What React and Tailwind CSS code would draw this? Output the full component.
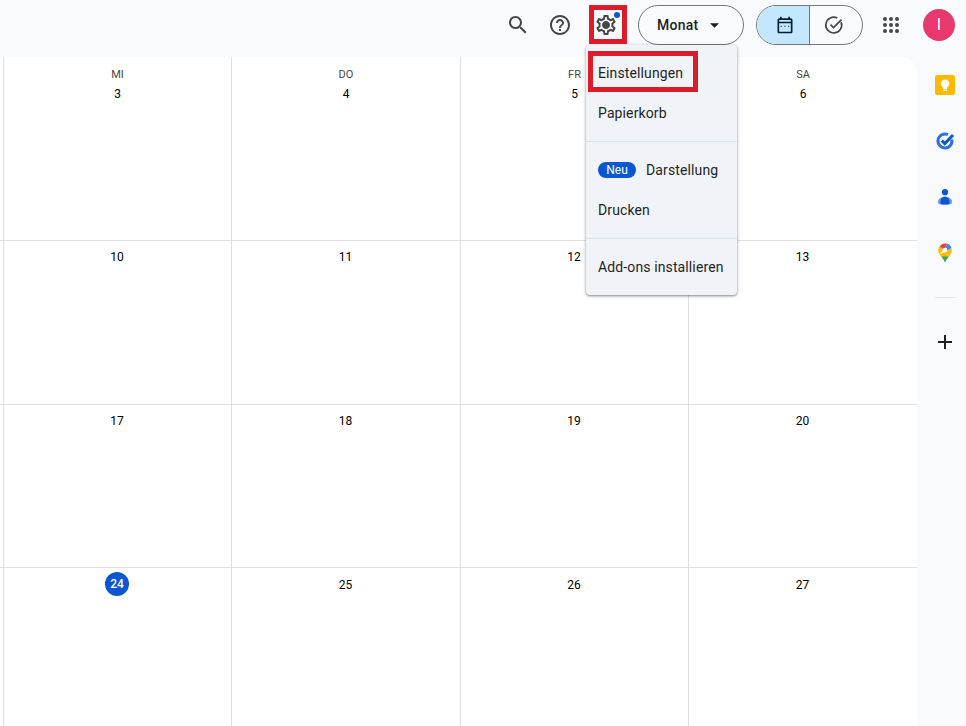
import React from 'react';

const weeks = [
  { rowClass: 'h-[183px]', days: ['3', '4', '5', '6'], labels: ['MI', 'DO', 'FR', 'SA'] },
  { rowClass: 'h-[164px]', days: ['10', '11', '12', '13'] },
  { rowClass: 'h-[163px]', days: ['17', '18', '19', '20'] },
  { rowClass: 'h-[159px]', days: ['24', '25', '26', '27'] },
];

const colWidths = ['w-[228px]', 'w-[229px]', 'w-[228px]', 'w-[229px]'];

function GearIcon() {
  return (
    <svg viewBox="0 0 24 24" className="w-[24px] h-[24px] fill-[#444746]">
      <path d="M19.43 12.98c.04-.32.07-.64.07-.98 0-.34-.03-.66-.07-.98l2.11-1.65c.19-.15.24-.42.12-.64l-2-3.46c-.09-.16-.26-.25-.44-.25-.06 0-.12.01-.17.03l-2.49 1c-.52-.4-1.08-.73-1.69-.98l-.38-2.65C14.46 2.18 14.25 2 14 2h-4c-.25 0-.46.18-.49.42l-.38 2.65c-.61.25-1.17.59-1.69.98l-2.49-1c-.06-.02-.12-.03-.18-.03-.17 0-.34.09-.43.25l-2 3.46c-.13.22-.07.49.12.64l2.11 1.65c-.04.32-.07.65-.07.98 0 .33.03.66.07.98l-2.11 1.65c-.19.15-.24.42-.12.64l2 3.46c.09.16.26.25.44.25.06 0 .12-.01.17-.03l2.49-1c.52.4 1.08.73 1.69.98l.38 2.65c.03.24.24.42.49.42h4c.25 0 .46-.18.49-.42l.38-2.65c.61-.25 1.17-.59 1.69-.98l2.49 1c.06.02.12.03.18.03.17 0 .34-.09.43-.25l2-3.46c.12-.22.07-.49-.12-.64l-2.11-1.65zm-1.98-1.71c.04.31.05.52.05.73 0 .21-.02.43-.05.73l-.14 1.13.89.7 1.08.84-.7 1.21-1.27-.51-1.04-.42-.9.68c-.43.32-.84.56-1.25.73l-1.06.43-.16 1.13-.2 1.35h-1.4l-.19-1.35-.16-1.13-1.06-.43c-.43-.18-.83-.41-1.23-.71l-.91-.7-1.06.43-1.27.51-.7-1.21 1.08-.84.89-.7-.14-1.13c-.03-.31-.05-.54-.05-.74s.02-.43.05-.73l.14-1.13-.89-.7-1.08-.84.7-1.21 1.27.51 1.04.42.9-.68c.43-.32.84-.56 1.25-.73l1.06-.43.16-1.13.2-1.35h1.39l.19 1.35.16 1.13 1.06.43c.43.18.83.41 1.23.71l.91.7 1.06-.43 1.27-.51.7 1.21-1.07.85-.89.7.14 1.13zM12 8c-2.21 0-4 1.79-4 4s1.79 4 4 4 4-1.79 4-4-1.79-4-4-4z" />
    </svg>
  );
}

function TopBar() {
  return (
    <div className="h-[57px] flex items-start pt-[5px] pl-[506px] relative">
      <div className="w-[24px] h-[40px] flex items-center">
        <svg viewBox="0 0 24 24" className="w-[24px] h-[24px] fill-[#444746]">
          <path d="M15.5 14h-.79l-.28-.27C15.41 12.59 16 11.11 16 9.5 16 5.91 13.09 3 9.5 3S3 5.91 3 9.5 5.91 16 9.5 16c1.61 0 3.09-.59 4.23-1.57l.27.28v.79l5 4.99L20.49 19l-4.99-5zm-6 0C7.01 14 5 11.99 5 9.5S7.01 5 9.5 5 14 7.01 14 9.5 11.99 14 9.5 14z" />
        </svg>
      </div>
      <div className="ml-[18px] w-[24px] h-[40px] flex items-center">
        <svg viewBox="0 0 24 24" className="w-[24px] h-[24px] fill-[#444746]">
          <path d="M11 18h2v-2h-2v2zm1-16C6.48 2 2 6.48 2 12s4.48 10 10 10 10-4.48 10-10S17.52 2 12 2zm0 18c-4.41 0-8-3.59-8-8s3.59-8 8-8 8 3.59 8 8-3.59 8-8 8zm0-14c-2.21 0-4 1.79-4 4h2c0-1.1.9-2 2-2s2 .9 2 2c0 2-3 1.75-3 5h2c0-2.25 3-2.5 3-5 0-2.21-1.79-4-4-4z" />
        </svg>
      </div>
      <div className="ml-[22px] w-[24px] h-[40px] flex items-center relative">
        <GearIcon />
        <span className="absolute top-[7px] right-[-2px] w-[6px] h-[6px] rounded-full bg-[#0b57d0]" />
      </div>
      <button className="ml-[20px] w-[106px] h-[40px] rounded-full border border-[#747775] flex items-center pl-[18px] text-[14px] font-medium tracking-[0.25px] text-[#1f1f1f]">
        Monat
        <svg viewBox="0 0 10 5" className="ml-[12px] w-[9px] h-[5px] fill-[#1f1f1f]">
          <path d="M0 0l5 5 5-5z" />
        </svg>
      </button>
      <div className="ml-[12px] w-[107px] h-[40px] rounded-full border border-[#747775] flex overflow-hidden">
        <div className="w-[53px] bg-[#c2e7ff] border-r border-[#747775] flex items-center justify-center pl-[4px]">
          <svg viewBox="0 0 24 24" className="w-[20px] h-[20px] fill-[#001d35]">
            <path d="M19 4h-1V2h-2v2H8V2H6v2H5c-1.1 0-2 .9-2 2v14c0 1.1.9 2 2 2h14c1.1 0 2-.9 2-2V6c0-1.1-.9-2-2-2zm0 16H5V10h14v10zm0-12H5V6h14v2zM8 13H6.9v1.5H8V13zm4.5 0h-1.1v1.5h1.1V13zm4.5 0h-1.1v1.5H17V13z" />
          </svg>
        </div>
        <div className="flex-1 flex items-center justify-center pr-[4px]">
          <svg viewBox="0 0 24 24" className="w-[20px] h-[20px] fill-none stroke-[#444746] stroke-2">
            <path d="M20.5 8.5A9.5 9.5 0 1 1 16 3.6" />
            <path d="M7.8 11.6l3.6 3.6L21 5.6" />
          </svg>
        </div>
      </div>
      <div className="ml-[20px] w-[16px] h-[40px] grid grid-cols-3 content-center gap-[2px]">
        {Array.from({ length: 9 }).map((_, i) => (
          <span key={i} className="w-[4px] h-[4px] rounded-full bg-[#444746]" />
        ))}
      </div>
      <div className="ml-[24px] mt-[4px] w-[32px] h-[32px] rounded-full bg-[#e8396f] flex items-center justify-center text-white text-[16px]">
        I
      </div>
    </div>
  );
}

function DayCell({ label, day, index, lastRow }) {
  const isToday = day === '24';
  return (
    <div className={`${colWidths[index]} border-l border-[#e0e0e0] flex flex-col items-center ${label ? 'pt-[10px]' : 'pt-[6px]'}`}>
      {label && <div className="h-[16px] leading-[16px] text-[11px] font-normal text-[#444746]">{label}</div>}
      {isToday ? (
        <div className="-mt-[2px] mr-[1px] w-[24px] h-[24px] rounded-full bg-[#0b57d0] text-white flex items-center justify-center text-[12px] font-medium">
          {day}
        </div>
      ) : (
        <div className={`leading-[20px] text-[12px] text-black ${label ? 'mt-[1px]' : 'mr-[1px]'} ${lastRow ? 'mt-[1px]' : ''}`}>{day}</div>
      )}
    </div>
  );
}

function Calendar() {
  return (
    <div className="w-[917px] h-[669px] bg-white rounded-tr-[16px] overflow-hidden">
      {weeks.map((week, r) => (
        <div key={r} className={`flex pl-[3px] ${week.rowClass} ${r > 0 ? 'border-t border-[#e0e0e0]' : ''}`}>
          {week.days.map((day, i) => (
            <DayCell key={day} day={day} index={i} lastRow={r === 3} label={week.labels ? week.labels[i] : null} />
          ))}
        </div>
      ))}
    </div>
  );
}

function SidePanel() {
  return (
    <div className="flex-1 flex flex-col items-center pl-[7px] pt-[18px]">
      {/* Keep */}
      <svg viewBox="0 0 20 20" className="w-[20px] h-[20px]">
        <rect width="20" height="20" rx="2" fill="#ffba00" />
        <circle cx="10" cy="8.6" r="4.2" fill="#fff" />
        <rect x="8" y="12" width="4" height="2" fill="#fff" />
        <rect x="8" y="14.6" width="4" height="1.2" fill="#fff" />
      </svg>
      {/* Tasks */}
      <svg viewBox="0 0 20 20" className="mt-[36px] w-[20px] h-[20px]">
        <path d="M16.8 8.5A7 7 0 1 1 12.8 3.6" fill="none" stroke="#2f6fe4" strokeWidth="3" />
        <path d="M6.8 9.6l3 3L18 4" fill="none" stroke="#0b57d0" strokeWidth="3" />
      </svg>
      {/* Contacts */}
      <svg viewBox="0 0 20 20" className="mt-[36px] w-[20px] h-[20px]">
        <circle cx="10" cy="5.2" r="3.1" fill="#0b57d0" />
        <path d="M3 15c0-3.2 3-5.2 7-5.2s7 2 7 5.2c0 1.5-1 2.5-2.5 2.5h-9C4 17.5 3 16.5 3 15z" fill="#6c97ea" />
        <path d="M5.4 15c0-2.8 2-5.2 4.6-5.2s4.6 2.4 4.6 5.2c0 1.5-.7 2.5-2 2.5H7.4C6.1 17.5 5.4 16.5 5.4 15z" fill="#0b57d0" />
      </svg>
      {/* Maps */}
      <svg viewBox="1 1 18 18.5" className="mt-[36px] w-[20px] h-[20px]">
        <path d="M10 19c-1-2.6-2.4-4.2-3.6-5.6L10 10l3.6 3.4C12.4 14.8 11 16.4 10 19z" fill="#34a853" />
        <path d="M4.8 11.2C4.2 10.2 3.8 9.2 3.8 7.6c0-1.4.5-2.6 1.3-3.6L9 7.4z" fill="#fbbc04" />
        <path d="M5.1 4C6.3 2.4 8 1.4 10 1.4c.8 0 1.6.2 2.3.4L9 7.4z" fill="#ea4335" />
        <path d="M12.3 1.8c1.7.6 3 1.9 3.6 3.5L11.4 9 9 7.4z" fill="#4285f4" />
        <path d="M15.9 5.3c.2.7.3 1.5.3 2.3 0 2.4-1.2 4.2-2.6 5.8L6.4 13.4l-1.6-2.2L11.4 9z" fill="#fbbc04" />
        <circle cx="10" cy="7.6" r="2.3" fill="#fff" />
      </svg>
      <div className="mt-[34px] w-[21px] border-t border-[#e3e7ec]" />
      <svg viewBox="0 0 24 24" className="mt-[32px] w-[24px] h-[24px] fill-[#1f1f1f]">
        <path d="M19 13h-6v6h-2v-6H5v-2h6V5h2v6h6v2z" />
      </svg>
    </div>
  );
}

function SettingsMenu() {
  const itemClass = 'h-[40px] flex items-center pl-[12px] text-[14px] tracking-[0.12px] text-[#1f1f1f]';
  return (
    <div className="absolute left-[586px] top-[45px] w-[151px] h-[250px] rounded-[4px] bg-[#f0f4f9] shadow-[0_1px_3px_1px_rgba(0,0,0,0.15),0_1px_2px_rgba(0,0,0,0.3)] pt-[8px]">
      <div className={itemClass}>Einstellungen</div>
      <div className={itemClass}>Papierkorb</div>
      <div className="mt-[8px] mb-[8px] border-t border-[#dde3ea]" />
      <div className={itemClass}>
        <span className="w-[38px] h-[16px] rounded-full bg-[#0b57d0] text-white text-[12px] tracking-normal leading-[16px] text-center mr-[10px]">Neu</span>
        Darstellung
      </div>
      <div className={itemClass}>Drucken</div>
      <div className="mt-[8px] mb-[8px] border-t border-[#dde3ea]" />
      <div className={itemClass}>Add-ons installieren</div>
    </div>
  );
}

export default function App() {
  return (
    <div className="w-[966px] h-[726px] bg-[#f8fafd] relative overflow-hidden font-['Roboto',sans-serif]">
      <TopBar />
      <div className="flex">
        <Calendar />
        <SidePanel />
      </div>
      <SettingsMenu />
      {/* Red highlight boxes */}
      <div className="absolute left-[589px] top-[5px] w-[38px] h-[39px] border-[5px] border-[#dd1c2b]" />
      <div className="absolute left-[588px] top-[51px] w-[110px] h-[41px] border-[5px] border-[#dd1c2b]" />
    </div>
  );
}
